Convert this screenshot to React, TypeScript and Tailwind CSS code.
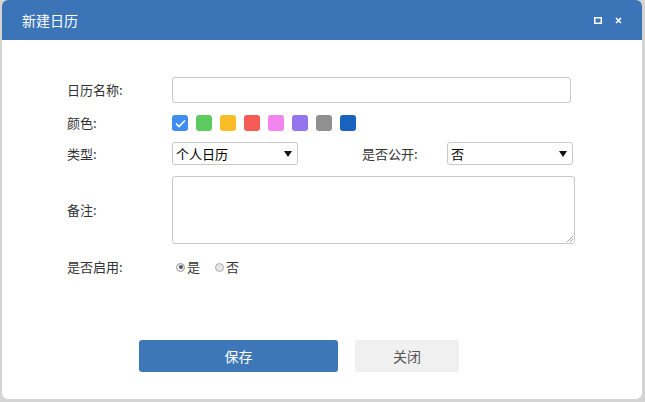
import React from 'react';

const swatches = ['#3f8cf2', '#5ccc61', '#fbbd27', '#f75b58', '#f184ef', '#9575ee', '#909090', '#1a62c0'];

const font = { fontFamily: '"Noto Sans CJK SC", "Noto Sans", sans-serif' };

const Select: React.FC<{ value: string }> = ({ value }) => (
  <div className="flex h-[23px] w-[126px] items-center justify-between rounded-[3px] border border-[#c8c8c8] bg-white pl-[3px] pr-[5px] text-[13px] text-black">
    <span>{value}</span>
    <svg width="8" height="6" viewBox="0 0 8 6"><path d="M0 0h8L4 6z" fill="#111" /></svg>
  </div>
);

export default function App() {
  return (
    <div className="h-[402px] w-[645px] bg-[#d4d4d4] pl-[2px] pr-[3px] pb-[3px]" style={font}>
      <div className="flex h-full flex-col overflow-hidden rounded-[6px] bg-white">
        <div className="flex h-[40px] shrink-0 items-center justify-between bg-[#3b74b7] pl-[20px] pr-[20px] text-white">
          <span className="text-[14px]">新建日历</span>
          <div className="flex items-center gap-[13px]">
            <svg width="8" height="7" viewBox="0 0 8 7"><rect x="0.75" y="0.75" width="6.5" height="5.5" fill="none" stroke="#fff" strokeWidth="1.5" /></svg>
            <svg width="7" height="7" viewBox="0 0 7 7"><path d="M1 1l5 5M6 1L1 6" stroke="#fff" strokeWidth="1.6" /></svg>
          </div>
        </div>

        <div className="flex flex-col pl-[65px] pt-[37px] text-[13px] leading-[16px] text-[#333]">
          <div className="flex items-center">
            <span className="w-[105px]">日历名称:</span>
            <div className="h-[26px] w-[399px] rounded-[3px] border border-[#c8c8c8]" />
          </div>

          <div className="mt-[12px] flex items-center">
            <span className="w-[105px]">颜色:</span>
            <div className="flex gap-[8px]">
              {swatches.map((c, i) => (
                <div key={c} className="flex h-[16px] w-[16px] items-center justify-center rounded-[3px]" style={{ backgroundColor: c }}>
                  {i === 0 && (
                    <svg width="11" height="9" viewBox="0 0 11 9"><path d="M1 4.5l3 3L10 1.5" fill="none" stroke="#fff" strokeWidth="1.6" /></svg>
                  )}
                </div>
              ))}
            </div>
          </div>

          <div className="mt-[11px] flex items-center">
            <span className="w-[105px]">类型:</span>
            <Select value="个人日历" />
            <span className="ml-[64px] w-[85px]">是否公开:</span>
            <Select value="否" />
          </div>

          <div className="mt-[11px] flex items-center">
            <span className="w-[105px]">备注:</span>
            <div className="relative h-[68px] w-[403px] rounded-[3px] border border-[#c8c8c8]">
              <svg className="absolute bottom-[1px] right-[1px]" width="7" height="7" viewBox="0 0 7 7"><path d="M7 1L1 7M7 4L4 7" stroke="#888" strokeWidth="0.8" /></svg>
            </div>
          </div>

          <div className="mt-[15px] flex items-center">
            <span className="w-[105px]">是否启用:</span>
            <label className="ml-[4px] flex items-center gap-[2px]">
              <span className="flex h-[9px] w-[9px] items-center justify-center rounded-full border border-[#999] bg-[#eee]">
                <span className="h-[4px] w-[4px] rounded-full bg-[#555]" />
              </span>
              <span>是</span>
            </label>
            <label className="ml-[15px] flex items-center gap-[2px]">
              <span className="h-[9px] w-[9px] rounded-full border border-[#aaa] bg-[#e6e6e6]" />
              <span>否</span>
            </label>
          </div>
        </div>

        <div className="mt-[65px] flex gap-[17px] pl-[137px]">
          <button className="h-[32px] w-[199px] rounded-[3px] bg-[#3d77b7] text-[14px] text-white">保存</button>
          <button className="h-[32px] w-[104px] rounded-[3px] bg-[#f0f0f0] text-[14px] text-[#555]">关闭</button>
        </div>
      </div>
    </div>
  );
}
